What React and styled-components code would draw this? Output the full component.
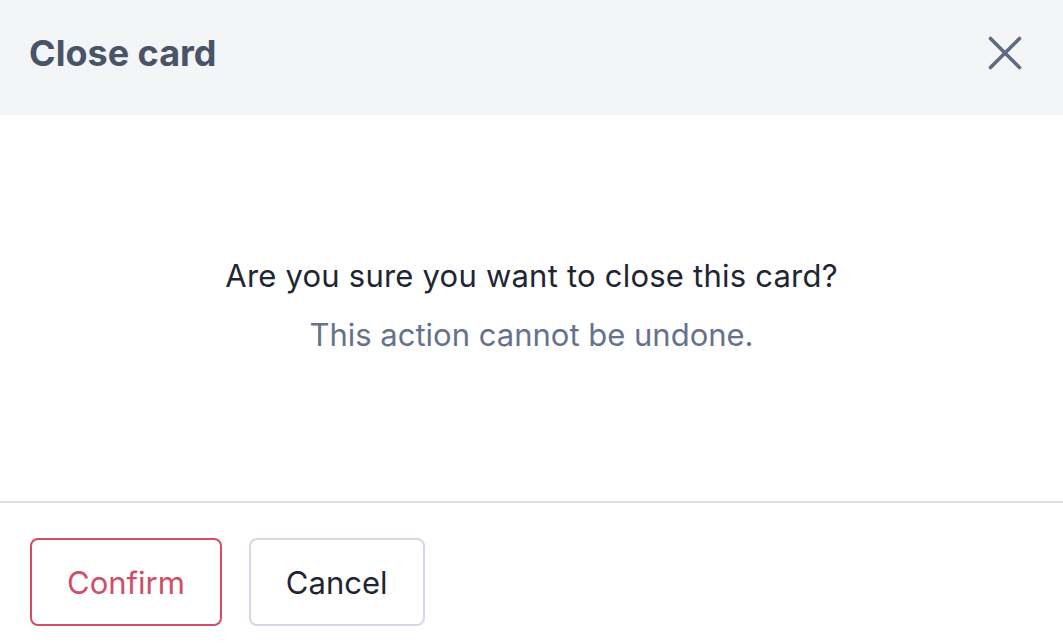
import React from 'react';
import styled, { createGlobalStyle } from 'styled-components';

const GlobalStyle = createGlobalStyle`
  html, body {
    margin: 0;
    padding: 0;
    background: #ffffff;
    font-family: Inter, "Noto Sans", sans-serif;
  }
`;

const Modal = styled.div`
  width: 1063px;
  height: 644px;
  display: flex;
  flex-direction: column;
  background: #ffffff;
  overflow: hidden;
`;

const Header = styled.div`
  height: 115px;
  flex-shrink: 0;
  display: flex;
  align-items: center;
  justify-content: space-between;
  padding: 0 41px 10px 29px;
  box-sizing: border-box;
  background: #f4f5f7;
`;

const Title = styled.h2`
  margin: 0;
  font-size: 36px;
  font-weight: 700;
  color: #4a5468;
`;

const CloseButton = styled.button`
  border: none;
  background: none;
  padding: 0;
  display: flex;
  color: #5f6b84;
  cursor: pointer;
`;

const Body = styled.div`
  height: 386px;
  flex-shrink: 0;
  display: flex;
  flex-direction: column;
  align-items: center;
  justify-content: center;
  gap: 22px;
  padding-bottom: 7px;
  box-sizing: border-box;
`;

const Question = styled.p`
  margin: 0;
  font-size: 31px;
  letter-spacing: 0.22px;
  color: #1f2633;
`;

const Note = styled.p`
  margin: 0;
  font-size: 31px;
  color: #66728c;
`;

const Footer = styled.div`
  border-top: 2px solid #d9dee8;
  display: flex;
  gap: 27px;
  padding: 35px 30px;
`;

const Button = styled.button`
  height: 88px;
  padding: 0 35px;
  border-radius: 8px;
  background: #ffffff;
  border: 2px solid ${p => (p.$danger ? '#d24d66' : '#d3d8e5')};
  color: ${p => (p.$danger ? '#d24d66' : '#1f2633')};
  font-family: Inter, "Noto Sans", sans-serif;
  font-size: 31px;
  cursor: pointer;
`;

export default function App() {
  return (
    <>
      <GlobalStyle />
      <Modal>
        <Header>
          <Title>Close card</Title>
          <CloseButton aria-label="Close">
            <svg width="34" height="34" viewBox="0 0 34 34" fill="none" stroke="currentColor" strokeWidth="3.6" strokeLinecap="round">
              <path d="M2.5 2.5L31.5 31.5M31.5 2.5L2.5 31.5" />
            </svg>
          </CloseButton>
        </Header>
        <Body>
          <Question>Are you sure you want to close this card?</Question>
          <Note>This action cannot be undone.</Note>
        </Body>
        <Footer>
          <Button $danger>Confirm</Button>
          <Button>Cancel</Button>
        </Footer>
      </Modal>
    </>
  );
}
